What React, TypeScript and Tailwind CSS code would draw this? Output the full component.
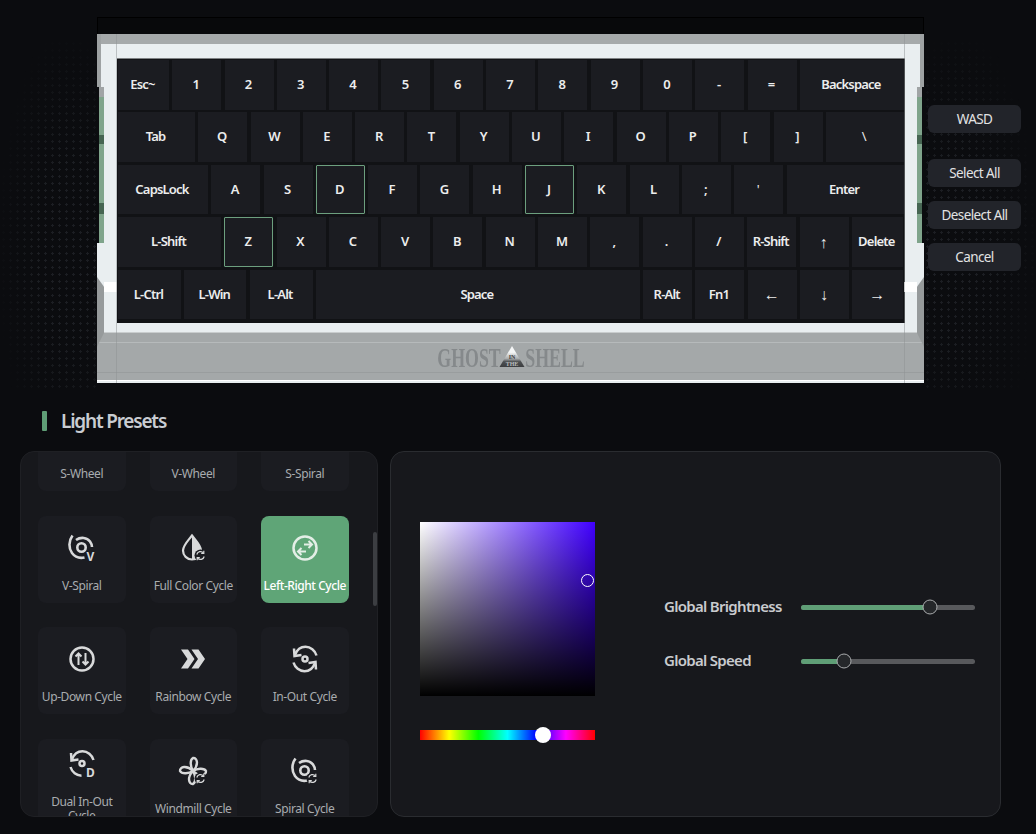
import type { ReactNode } from 'react';

type KeyDef = { label: string; w?: string; on?: boolean; thin?: boolean; arrow?: boolean };

const k = (label: string, w?: string, on?: boolean): KeyDef => ({ label, w, on });

const rows: KeyDef[][] = [
  [k('Esc~', 'w-[51px]'), ...'1234567890-='.split('').map((c) => k(c)), k('Backspace', 'w-[104px]')],
  [k('Tab', 'w-[77px]'), ...'QWERTYUIOP[]'.split('').map((c) => k(c)), { label: '\\', w: 'w-[78px]', thin: true }],
  [
    k('CapsLock', 'w-[90px]'),
    k('A'),
    k('S'),
    k('D', undefined, true),
    k('F'),
    k('G'),
    k('H'),
    k('J', undefined, true),
    k('K'),
    k('L'),
    k(';'),
    { label: "'", thin: true },
    k('Enter', 'w-[117px]'),
  ],
  [
    k('L-Shift', 'w-[103px]'),
    k('Z', undefined, true),
    ...'XCVBNM,./'.split('').map((c) => k(c)),
    k('R-Shift'),
    { label: '↑', arrow: true },
    k('Delete', 'w-[51px]'),
  ],
  [
    k('L-Ctrl', 'w-[63px]'),
    k('L-Win', 'w-[62px]'),
    k('L-Alt', 'w-[63px]'),
    k('Space', 'w-[324px]'),
    k('R-Alt'),
    k('Fn1'),
    { label: '←', arrow: true },
    { label: '↓', arrow: true },
    { label: '→', w: 'w-[51px]', arrow: true },
  ],
];

function Badge() {
  return (
    <g>
      <circle cx="21.5" cy="21.5" r="6" fill="#1b1c21" />
      <path d="M17.8 20.5a3.8 3.8 0 0 1 6.6-1.6M25.2 22.5a3.8 3.8 0 0 1-6.6 1.6" fill="none" stroke="currentColor" strokeWidth="1.2" />
      <path d="M24.8 16.8v2.6h-2.6M18.2 26.2v-2.6h2.6" fill="none" stroke="currentColor" strokeWidth="1.2" />
    </g>
  );
}

function Spiral() {
  return (
    <g fill="none" stroke="currentColor" strokeWidth="2.6">
      <circle cx="13.5" cy="13.5" r="4.2" />
      <path d="M4.5 1.5C.5 7 .5 14 4 19c3 4 8 5.5 12.5 4.5" />
      <path d="M8 6c5-3.5 11-2.5 14 1.5 1.2 1.7 2 3.5 2 5.5" />
    </g>
  );
}

function Letter({ c }: { c: string }) {
  return (
    <text x="22.5" y="27" textAnchor="middle" fontSize="12" fontWeight="700" fill="currentColor" fontFamily="'Noto Sans', sans-serif">
      {c}
    </text>
  );
}

function Windmill() {
  const petal = 'M14 14C11.5 10 10.5 3 14 1c4.5-.5 6 7 0 13Z';
  return (
    <g fill="none" stroke="currentColor" strokeWidth="2.4">
      <path d={petal} />
      <path d={petal} transform="rotate(90 14 14)" />
      <path d={petal} transform="rotate(180 14 14)" />
      <path d={petal} transform="rotate(270 14 14)" />
    </g>
  );
}

const icons: Record<string, ReactNode> = {
  windmill: <Windmill />,
  spiral: <Spiral />,
  vspiral: (
    <>
      <Spiral />
      <Letter c="V" />
    </>
  ),
  drop: (
    <>
      <path d="M13 1.5C8 8 4 11.5 4 16.5a9 9 0 0 0 18 0C22 11.5 18 8 13 1.5Z" fill="none" stroke="currentColor" strokeWidth="2.2" />
      <path d="M13 1.5C18 8 22 11.5 22 16.5a9 9 0 0 1-9 9Z" fill="currentColor" />
      <Badge />
    </>
  ),
  leftright: (
    <g fill="none" stroke="currentColor" strokeWidth="2.5">
      <circle cx="14" cy="14" r="11.5" />
      <path d="M13 10.5h8M17.5 7l3.5 3.5L17.5 14" strokeWidth="2" />
      <path d="M15 17.5H7M10.5 14 7 17.5l3.5 3.5" strokeWidth="2" />
    </g>
  ),
  updown: (
    <g fill="none" stroke="currentColor" strokeWidth="2.5">
      <circle cx="14" cy="14" r="11.5" />
      <path d="M10.5 20V8.5M7.5 11.5l3-3 3 3" strokeWidth="2" />
      <path d="M17.5 8v11.5M14.5 16.5l3 3 3-3" strokeWidth="2" />
    </g>
  ),
  chevrons: (
    <>
      <path d="M2 4.5h7l6.5 9.5L9 23.5H2L8.5 14Z" fill="currentColor" />
      <path d="M12.5 4.5h7L26 14l-6.5 9.5h-7L19 14Z" fill="currentColor" />
    </>
  ),
  inout: (
    <g fill="none" stroke="currentColor" strokeWidth="2.5">
      <circle cx="14" cy="14" r="2.5" />
      <path d="M4 10C6 4.5 10 1.800 14.5 1.800c5 0 9.500 3.500 11 8.700" />
      <path d="M3 3.500 3.500 11l7-1" />
      <path d="M24 18c-2 5.500-6 8.200-10.500 8.200-5 0-9.500-3.500-11-8.700" />
      <path d="M25 24.500 24.500 17l-7 1" />
    </g>
  ),
  dual: (
    <>
      <g fill="none" stroke="currentColor" strokeWidth="2.5">
        <circle cx="14" cy="13.5" r="2.5" />
        <path d="M4 9.500C6 4 10 1.300 14.500 1.300c5 0 9.500 3.500 11 8.700" />
        <path d="M3 3 3.500 10.500l7-1" />
        <path d="M2.500 17c1.500 5.200 6 8.700 11 8.700" />
      </g>
      <Letter c="D" />
    </>
  ),
};

const tiles = [
  { label: 'S-Wheel', icon: 'windmill' },
  { label: 'V-Wheel', icon: 'windmill' },
  { label: 'S-Spiral', icon: 'spiral' },
  { label: 'V-Spiral', icon: 'vspiral' },
  { label: 'Full Color Cycle', icon: 'drop' },
  { label: 'Left-Right Cycle', icon: 'leftright', on: true },
  { label: 'Up-Down Cycle', icon: 'updown' },
  { label: 'Rainbow Cycle', icon: 'chevrons' },
  { label: 'In-Out Cycle', icon: 'inout' },
  { label: 'Dual In-Out Cycle', icon: 'dual' },
  { label: 'Windmill Cycle', icon: 'windmill', badge: true },
  { label: 'Spiral Cycle', icon: 'spiral', badge: true },
];

// left/right trim of the case, the right one is the mirror image
function SideTrim({ className }: { className: string }) {
  return (
    <div className={`absolute top-0 w-[20px] flex flex-col ${className}`}>
      <div className="w-[4px] h-[53px] bg-[#9ea2a3]" />
      <div className="flex h-[156px]">
        <div className="w-[2px] bg-[#0b0c0f]" />
        <div className="w-[5px] flex flex-col">
          <div className="h-[10px] bg-[#a0a4a5]" />
          <div className="h-[38px] bg-[#7fa48b]" />
          <div className="h-[9px] bg-[#466552]" />
          <div className="h-[59px] bg-[#7fa48b]" />
          <div className="h-[11px] bg-[#466552]" />
          <div className="h-[29px] bg-[#7fa48b]" />
        </div>
      </div>
      <div className="h-[34px]" />
      <div className="flex h-[70px]">
        <div className="w-[7px] bg-[#969a9b] [clip-path:polygon(0_0,100%_14%,100%_80%,0_100%)]" />
        <div className="w-[13px] h-[10px] mt-[5px] bg-white" />
      </div>
    </div>
  );
}

function Logo() {
  return (
    <div className="flex items-center justify-center h-full pl-[2px] pt-[1px] text-[#85898b]">
      <span className="w-[60px] flex justify-center font-['Liberation_Serif',serif] font-bold text-[27px] leading-none scale-x-[0.66]">GHOST</span>
      <svg viewBox="0 0 26 22" className="w-[26px] h-[22px] -mt-[2px]">
        <defs>
          <linearGradient id="peak" x1="0" y1="0" x2="0" y2="1">
            <stop offset="0.3" stopColor="#f4f6f6" />
            <stop offset="0.6" stopColor="#a9acad" />
            <stop offset="0.75" stopColor="#4c4f51" />
            <stop offset="1" stopColor="#3c3e40" />
          </linearGradient>
        </defs>
        <path d="M13 0 25.5 21H.5Z" fill="url(#peak)" />
        <text x="13" y="13" textAnchor="middle" fontSize="6" fontWeight="700" fill="#3c3e40" fontFamily="'Liberation Serif', serif">
          IN
        </text>
        <text x="13" y="20" textAnchor="middle" fontSize="6" fontWeight="700" fill="#b9bcbd" fontFamily="'Liberation Serif', serif">
          THE
        </text>
      </svg>
      <span className="w-[60px] flex justify-center font-['Liberation_Serif',serif] font-bold text-[27px] leading-none scale-x-[0.66]">SHELL</span>
    </div>
  );
}

function Keyboard() {
  return (
    <div className="relative w-[827px] h-[349px] bg-[#e9eef0]">
      <SideTrim className="left-0" />
      <SideTrim className="right-0 -scale-x-100" />

      <div className="h-[10px] bg-[#a5a9aa]" />
      <div className="mx-[20px] mt-[14px] w-[788px] h-[265px] bg-[#111215] border-t border-[#7d8082] px-px pt-px flex flex-col gap-[2.9px]">
        {rows.map((row, i) => (
          <div key={i} className="flex gap-[3.3px]">
            {row.map((key) => (
              <div
                key={key.label}
                className={`${key.w ?? 'w-[49px]'} h-[49.5px] shrink-0 flex items-center justify-center pr-[2px] bg-[#1b1c21] text-[#eceded] tracking-[-0.8px] ${
                  key.arrow ? 'text-[16px] font-normal' : key.thin ? 'text-[13px] font-normal' : 'text-[13px] font-semibold'
                } ${key.on ? 'border border-[#6c9f7e] rounded-[1px]' : ''}`}
              >
                {key.label}
              </div>
            ))}
          </div>
        ))}
      </div>
      <div className="h-[10px] border-b border-[#c9cdce]" />
      <div className="h-[48px] bg-[#a4a8a9] border-b border-white flex flex-col">
        <div className="h-[10px] border-b border-[#b6babb]" />
        <div className="h-[30px] border-b border-[#999d9e]">
          <Logo />
        </div>
      </div>
      <div className="absolute left-[19px] top-0 bottom-0 w-px bg-[#8e9293]/50" />
      <div className="absolute right-[19px] top-0 bottom-0 w-px bg-[#8e9293]/50" />
    </div>
  );
}

function SideButton({ label, className }: { label: string; className?: string }) {
  return (
    <button className={`w-[93px] h-[28px] rounded-[6px] bg-[#22242a] text-[#e2e3e4] text-[13.5px] tracking-[-0.6px] flex items-center justify-center ${className ?? ''}`}>
      {label}
    </button>
  );
}

function Tile({ label, icon, on, badge }: { label: string; icon: string; on?: boolean; badge?: boolean }) {
  return (
    <div
      className={`w-[87.5px] h-[87px] rounded-[8px] pt-[8px] flex flex-col items-center justify-center gap-[17px] ${
        on ? 'bg-[#5fa577] text-white' : 'bg-[#1b1c21] text-[#a9acaf]'
      }`}
    >
      <svg viewBox="0 0 28 28" className={`w-[28px] h-[28px] shrink-0 overflow-visible ${on ? 'text-[#e3eee6]' : 'text-[#d8d9da]'}`}>
        {icons[icon]}
        {badge && <Badge />}
      </svg>
      <span className={`text-[12px] leading-[14px] text-center ${on ? 'font-medium tracking-[-0.45px] whitespace-nowrap' : 'tracking-[-0.4px]'}`}>{label}</span>
    </div>
  );
}

function Slider({ label, fill, thumb }: { label: string; fill: string; thumb: string }) {
  return (
    <div className="flex items-center h-[20px]">
      <span className="w-[137px] pb-[2px] text-[15px] font-semibold tracking-[-0.7px] text-[#c9cbce]">{label}</span>
      <div className="relative w-[174px] h-[5px] rounded-full bg-[#58595c]">
        <div className={`h-full rounded-full bg-[#5f9e76] ${fill}`} />
        <div className={`absolute top-1/2 -translate-x-1/2 -translate-y-1/2 w-[15px] h-[15px] rounded-full bg-[#25272a] border border-[#a9abad] ${thumb}`} />
      </div>
    </div>
  );
}

export default function App() {
  return (
    <div className="relative w-[1036px] h-[834px] overflow-hidden bg-[#0b0c0f] font-['Noto_Sans',sans-serif]">
      {/* dotted backdrop */}
      <div className="absolute left-0 top-[40px] w-[97px] h-[350px] bg-[radial-gradient(circle,#24272c_1px,transparent_1.2px)] bg-[size:7px_7px] [mask-image:radial-gradient(ellipse_at_70%_60%,black_30%,transparent_75%)] opacity-70" />
      <div className="absolute left-[924px] top-[40px] w-[112px] h-[350px] bg-[radial-gradient(circle,#24272c_1px,transparent_1.2px)] bg-[size:7px_7px] [mask-image:radial-gradient(ellipse_at_30%_60%,black_30%,transparent_75%)] opacity-70" />

      <div className="relative flex pl-[97px] pt-[17px]">
        <div>
          <div className="h-[17px] w-[827px] bg-[#08090b] border-t border-x border-black" />
          <Keyboard />
        </div>
        <div className="ml-[4px] pt-[88px] flex flex-col">
          <SideButton label="WASD" className="pt-px" />
          <div className="mt-[26px] flex flex-col gap-[14px]">
            <SideButton label="Select All" />
            <SideButton label="Deselect All" />
            <SideButton label="Cancel" className="pt-px" />
          </div>
        </div>
      </div>

      <div className="relative flex items-center gap-[14px] ml-[42px] mt-[28px] h-[20px]">
        <div className="w-[5px] h-[20px] rounded-[1px] bg-[#5f9e76]" />
        <h2 className="text-[19px] font-semibold tracking-[-1.2px] text-[#c9cdd2]">Light Presets</h2>
      </div>

      <div className="relative flex gap-[12px] ml-[20px] mt-[20px]">
        <div className="relative w-[358px] h-[366px] rounded-[14px] bg-[#17181c] border border-[#1f2024] overflow-hidden">
          <div className="grid grid-cols-[87.5px_87.5px_87.5px] gap-x-[24px] gap-y-[24.5px] pl-[17px] -mt-[48px]">
            {tiles.map((t) => (
              <Tile key={t.label} {...t} />
            ))}
          </div>
          <div className="absolute right-0 top-[80px] w-[4px] h-[74px] rounded-full bg-[#3c3e42]" />
        </div>

        <div className="flex w-[611px] h-[366px] rounded-[14px] bg-[#17181c] border border-[#2a2c30] pl-[29px] pt-[70px]">
          <div className="w-[175px]">
            <div className="relative h-[174px] bg-[linear-gradient(to_top,#000,transparent),linear-gradient(to_right,#fff,#4000ff)]">
              <div className="absolute left-[161px] top-[52px] w-[13px] h-[13px] rounded-full border-[1.5px] border-white" />
            </div>
            <div className="relative mt-[34px] h-[10px] bg-[linear-gradient(to_right,#f00,#ff0,#0f0,#0ff,#00f,#f0f,#f00)]">
              <div className="absolute left-[115px] top-[-3px] w-[16px] h-[16px] rounded-full bg-white" />
            </div>
          </div>
          <div className="ml-[69px] pt-[75px] flex flex-col gap-[34px]">
            <Slider label="Global Brightness" fill="w-[74%]" thumb="left-[74%]" />
            <Slider label="Global Speed" fill="w-[24.7%]" thumb="left-[24.7%]" />
          </div>
        </div>
      </div>
    </div>
  );
}
